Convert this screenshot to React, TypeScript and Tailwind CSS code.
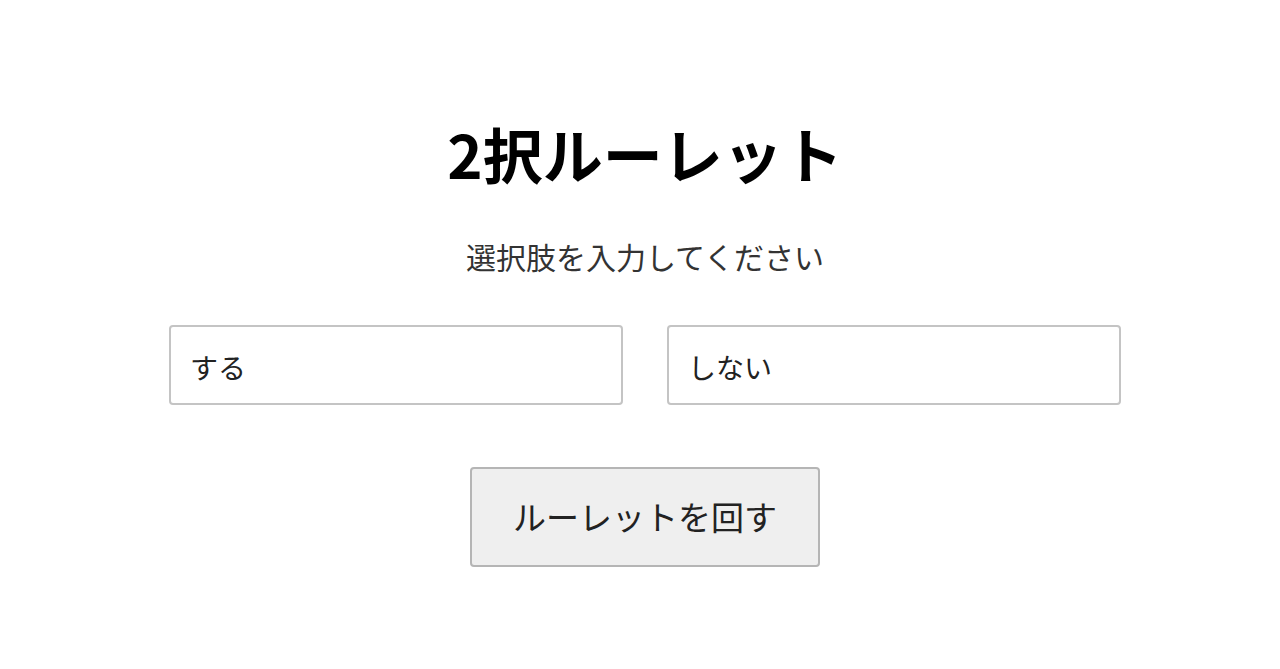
import React, { useState } from 'react'

const App = () => {
  const [first, setFirst] = useState('する')
  const [second, setSecond] = useState('しない')

  return (
    <div className="min-h-screen bg-white pl-[10px] font-['Noto_Sans_CJK_JP',sans-serif]">
      <div className="flex flex-col items-center">
        <h1 className="mt-[123px] text-[60px] leading-[60px] font-bold text-black">2択ルーレット</h1>
        <p className="mt-[58px] text-[30px] leading-[30px] text-[#333]">選択肢を入力してください</p>

        {/* choices */}
        <div className="mt-[54px] flex gap-[44px]">
          <input
            type="text"
            value={first}
            onChange={(e) => setFirst(e.target.value)}
            className="w-[454px] h-[80px] px-[19px] pt-[3px] border-2 border-[#c4c4c4] rounded-[4px] text-[28px] text-[#222] outline-none"
          />
          <input
            type="text"
            value={second}
            onChange={(e) => setSecond(e.target.value)}
            className="w-[454px] h-[80px] px-[19px] pt-[3px] border-2 border-[#c4c4c4] rounded-[4px] text-[28px] text-[#222] outline-none"
          />
        </div>

        <button className="mt-[62px] w-[350px] h-[100px] bg-[#efefef] border-2 border-[#b5b5b5] rounded-[4px] text-[33px] text-[#222]">
          ルーレットを回す
        </button>
      </div>
    </div>
  )
}

export default App
